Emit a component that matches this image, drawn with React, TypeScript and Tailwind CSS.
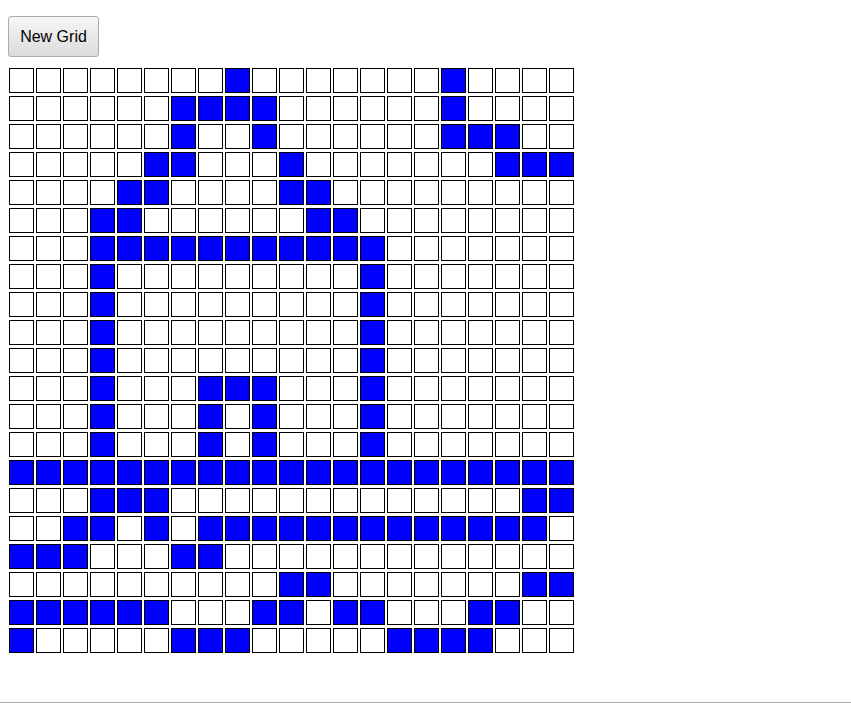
import React from "react";

const ON: Record<number, number[]> = {
  0: [8, 16],
  1: [6, 7, 8, 9, 16],
  2: [6, 9, 16, 17, 18],
  3: [5, 6, 10, 18, 19, 20],
  4: [4, 5, 10, 11],
  5: [3, 4, 11, 12],
  6: [3, 4, 5, 6, 7, 8, 9, 10, 11, 12, 13],
  7: [3, 13],
  8: [3, 13],
  9: [3, 13],
  10: [3, 13],
  11: [3, 7, 8, 9, 13],
  12: [3, 7, 9, 13],
  13: [3, 7, 9, 13],
  14: Array.from({ length: 21 }, (_, i) => i),
  15: [3, 4, 5, 19, 20],
  16: [2, 3, 5, 7, 8, 9, 10, 11, 12, 13, 14, 15, 16, 17, 18, 19],
  17: [0, 1, 2, 6, 7],
  18: [10, 11, 19, 20],
  19: [0, 1, 2, 3, 4, 5, 9, 10, 12, 13, 17, 18],
  20: [0, 6, 7, 8, 14, 15, 16, 17],
};

export default function App() {
  const rows = Array.from({ length: 21 }, (_, r) => r);
  const cols = Array.from({ length: 21 }, (_, c) => c);
  return (
    <div
      className="h-[703px] flex flex-col bg-white"
      style={{ fontFamily: '"Liberation Sans", Arial, sans-serif' }}
    >
      <div className="flex-1 pl-[8px] pt-[16px]">
        <button className="h-[41px] w-[91px] rounded-[3px] border border-[#acacac] bg-gradient-to-b from-[#f6f6f6] to-[#dcdcdc] text-[16px] text-black leading-none">
          New Grid
        </button>
        <div className="mt-[11px] ml-[1px] flex flex-col gap-[3px]">
          {rows.map((r) => (
            <div key={r} className="flex gap-[2px]">
              {cols.map((c) => (
                <div
                  key={c}
                  className={
                    ON[r].includes(c)
                      ? "h-[25px] w-[25px] border border-black bg-[#0000ff]"
                      : "h-[25px] w-[25px] border border-black bg-white"
                  }
                />
              ))}
            </div>
          ))}
        </div>
      </div>
      <div className="h-px bg-[#a9aeb3]" />
    </div>
  );
}
